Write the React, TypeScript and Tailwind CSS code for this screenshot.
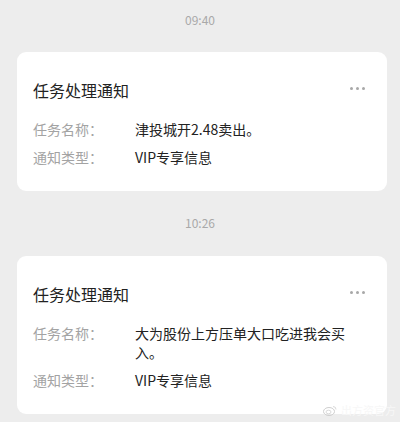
import React from "react";

const font = { fontFamily: '"Noto Sans CJK SC", "Noto Sans", sans-serif' };

function Dots() {
  return (
    <div className="flex items-center gap-[3px] pt-[1px]">
      <span className="w-[3px] h-[3px] rounded-full bg-[#a8a8a8]" />
      <span className="w-[3px] h-[3px] rounded-full bg-[#a8a8a8]" />
      <span className="w-[3px] h-[3px] rounded-full bg-[#a8a8a8]" />
    </div>
  );
}

function Card({ name }: { name: string }) {
  return (
    <div className="ml-[17px] w-[370px] bg-white rounded-[9px] pl-4 pr-[22px] pt-[26px] pb-[24px]">
      <div className="flex items-start justify-between">
        <div className="text-[16px] leading-[24px] text-[#222222]">任务处理通知</div>
        <div className="mt-[8px]">
          <Dots />
        </div>
      </div>
      <div className="mt-[18px] flex flex-col gap-[9px]">
        <div className="flex text-[14px] leading-[19px]">
          <div className="w-[102px] shrink-0 text-[#a3a3a3]">任务名称：</div>
          <div className="w-[216px] text-[#222222]">{name}</div>
        </div>
        <div className="flex text-[14px] leading-[19px]">
          <div className="w-[102px] shrink-0 text-[#a3a3a3]">通知类型：</div>
          <div className="w-[216px] text-[#222222]">VIP专享信息</div>
        </div>
      </div>
    </div>
  );
}

export default function App() {
  return (
    <div className="relative w-[400px] h-[422px] bg-[#ededed] overflow-hidden" style={font}>
      <div className="pt-[12px] h-[52px] text-center text-[12px] leading-[16px] text-[#a9a9a9]">09:40</div>
      <Card name="津投城开2.48卖出。" />
      <div className="pt-[24px] h-[65px] text-center text-[12px] leading-[16px] text-[#a9a9a9]">10:26</div>
      <Card name="大为股份上方压单大口吃进我会买入。" />
      <div className="absolute right-[4px] bottom-[6px] flex items-center gap-[4px] text-[11px] leading-[12px]">
        <svg width="14" height="11" viewBox="0 0 14 11">
          <ellipse cx="6" cy="6.5" rx="5.5" ry="4" fill="none" stroke="#cfcfcf" strokeWidth="1" />
          <ellipse cx="5.5" cy="7" rx="2.5" ry="1.8" fill="none" stroke="#cfcfcf" strokeWidth="0.8" />
          <path d="M10 1.5 a3 3 0 0 1 3 3" fill="none" stroke="#cfcfcf" strokeWidth="0.8" />
        </svg>
        <span className="text-[#f7f7f7]">出方资官方</span>
      </div>
    </div>
  );
}
